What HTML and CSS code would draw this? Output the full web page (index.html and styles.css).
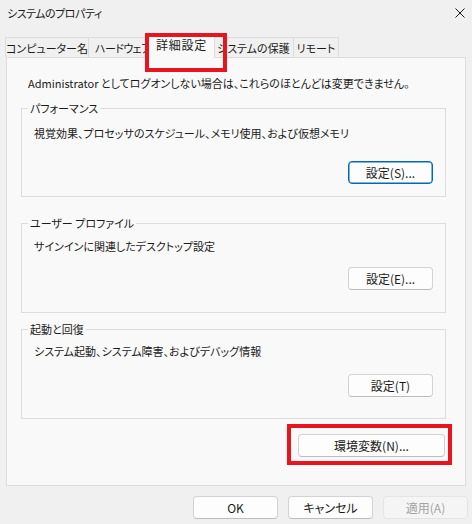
FILE: index.html
```html
<!DOCTYPE html>
<html lang="ja">
<head>
<meta charset="utf-8">
<link rel="stylesheet" href="styles.css">
</head>
<body>
<div class="window">
  <div class="titlebar">
    <span class="title">システムのプロパティ</span>
    <svg class="close" width="10" height="10" viewBox="0 0 10 10"><path d="M0.5 0.5 L9.5 9.5 M9.5 0.5 L0.5 9.5" stroke="#1a1a1a" stroke-width="1" fill="none"/></svg>
  </div>
  <div class="tabs">
    <div class="tab t1">コンピューター名</div>
    <div class="tab t2">ハードウェア</div>
    <div class="tab t3 active">詳細設定</div>
    <div class="tab t4">システムの保護</div>
    <div class="tab t5">リモート</div>
  </div>
  <div class="panel">
    <p class="note">Administrator としてログオンしない場合は、これらのほとんどは変更できません。</p>
    <fieldset class="group g1">
      <legend>パフォーマンス</legend>
      <p class="desc">視覚効果、プロセッサのスケジュール、メモリ使用、および仮想メモリ</p>
      <div class="btnrow"><button class="btn default">設定(S)...</button></div>
    </fieldset>
    <fieldset class="group g2">
      <legend>ユーザー プロファイル</legend>
      <p class="desc">サインインに関連したデスクトップ設定</p>
      <div class="btnrow"><button class="btn">設定(E)...</button></div>
    </fieldset>
    <fieldset class="group g3">
      <legend>起動と回復</legend>
      <p class="desc">システム起動、システム障害、およびデバッグ情報</p>
      <div class="btnrow"><button class="btn">設定(T)</button></div>
    </fieldset>
    <div class="envrow"><button class="btn env">環境変数(N)...</button></div>
  </div>
  <div class="footer">
    <button class="btn fbtn">OK</button>
    <button class="btn fbtn">キャンセル</button>
    <button class="btn fbtn disabled">適用(A)</button>
  </div>
</div>
</body>
</html>
```
FILE: styles.css
```css
* { box-sizing: border-box; }
html, body { margin: 0; padding: 0; }
body {
  width: 472px;
  height: 524px;
  background: #f0f0f0;
  font-family: "Noto Sans CJK JP", "Noto Sans", sans-serif;
  font-size: 11px;
  font-feature-settings: "palt";
  color: #1a1a1a;
  overflow: hidden;
}
.window { width: 472px; height: 524px; display: flex; flex-direction: column; }

.titlebar {
  height: 26px;
  display: flex;
  align-items: center;
  justify-content: space-between;
  padding: 0 7px 0 7px;
}
.title { line-height: 26px; letter-spacing: -0.5px; }

.tabs {
  margin-top: 11px;
  height: 20px;
  display: flex;
  align-items: flex-end;
  padding-left: 5px;
}
.tab {
  flex-shrink: 0;
  white-space: nowrap;
  height: 20px;
  border: 1px solid #dcdcdc;
  border-bottom: none;
  background: #f0f0f0;
  display: flex;
  align-items: center;
  justify-content: center;
  line-height: 16px;
  margin-right: -1px;
}
.t1 { width: 84px; }
.t2 { width: 64px; justify-content: flex-start; padding-left: 6px; letter-spacing: -0.6px; }
.t3 { width: 63px; }
.t4 { width: 82px; justify-content: flex-start; padding-left: 4px; }
.t5 { width: 46px; }
.tab.active {
  position: relative;
  z-index: 2;
  height: 24px;
  margin: 0 -3px -1px -3px;
  width: 67px;
  background: #f9f9f9;
  padding-bottom: 3px;
  font-size: 12px;
  letter-spacing: 0.8px;
}
.tab.active::after {
  content: "";
  position: absolute;
  left: -4px;
  top: -2px;
  width: 74px;
  height: 31px;
  border: 4px solid #e8141e;
}

.panel {
  margin-left: 6px;
  width: 460px;
  height: 429px;
  background: #f9f9f9;
  border: 1px solid #dcdcdc;
  padding: 17px 19px 0 14px;
}
.note { margin: 0 0 9px 7px; line-height: 16px; }

.group {
  margin: 0;
  padding: 0;
  border: 1px solid #dcdcdc;
  min-width: 0;
}
.group legend {
  margin-left: 6px;
  padding: 0 2px;
  line-height: 16px;
}
.desc { margin: 0 0 0 12px; line-height: 16px; }
.btnrow { display: flex; justify-content: flex-end; padding-right: 12px; }

.g1 .desc { margin-top: 9px; }
.g1 .btnrow { margin-top: 20px; padding-bottom: 12px; }
.g2 { margin-top: 18px; }
.g2 .desc { margin-top: 7px; }
.g2 .btnrow { margin-top: 13px; padding-bottom: 22px; }
.g3 { margin-top: 8px; }
.g3 .desc { margin-top: 6px; }
.g3 .btnrow { margin-top: 15px; padding-bottom: 21px; }

.btn {
  font: inherit;
  font-size: 12px;
  font-feature-settings: "palt";
  color: #1a1a1a;
  height: 23px;
  width: 85px;
  padding: 0;
  background: #fdfdfd;
  border: 1px solid #d3d3d3;
  border-bottom-color: #bcbcbc;
  border-radius: 4px;
  line-height: 20px;
}
.btn.default {
  border: 1px solid #0067c0;
  box-shadow: inset 0 0 0 0.5px #0067c0;
}

.envrow {
  display: flex;
  justify-content: flex-end;
  margin-top: 15px;
  padding-right: 1px;
}
.btn.env { width: 147px; position: relative; }
.btn.env::after {
  content: "";
  position: absolute;
  left: -12px;
  top: -11px;
  right: -8px;
  bottom: -9px;
  border: 4px solid #e8141e;
}

.footer {
  margin-top: 10px;
  display: flex;
  justify-content: flex-end;
  gap: 10px;
  padding-right: 4px;
}
.btn.disabled {
  color: #a3a3a3;
  background: #f5f5f5;
  border-color: #e5e5e5;
}
```
